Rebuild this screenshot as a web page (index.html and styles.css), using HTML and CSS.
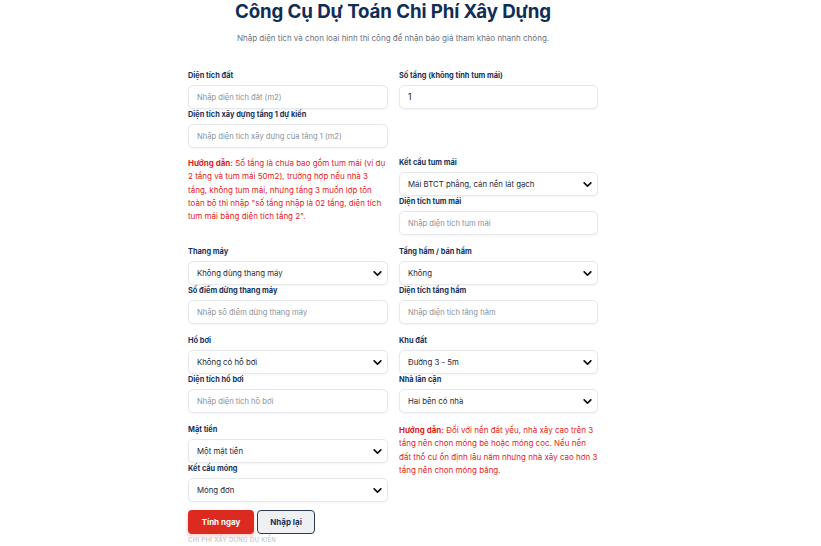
FILE: index.html
```html
<!DOCTYPE html>
<html lang="vi">
<head>
<meta charset="utf-8">
<title>Công Cụ Dự Toán Chi Phí Xây Dựng</title>
<link rel="stylesheet" href="styles.css">
</head>
<body>
<div class="page">
  <header class="head">
    <h1 class="title">Công Cụ Dự Toán Chi Phí Xây Dựng</h1>
    <p class="sub">Nhập diện tích và chọn loại hình thi công để nhận báo giá tham khảo nhanh chóng.</p>
  </header>

  <form class="form">
    <section class="sec sec-a">
      <div class="field"><label class="lbl">Diện tích đất</label><input class="ctl" type="text" placeholder="Nhập diện tích đất (m2)"></div>
      <div class="field"><label class="lbl">Số tầng (không tính tum mái)</label><input class="ctl val" type="text" value="1"></div>
      <div class="field"><label class="lbl">Diện tích xây dựng tầng 1 dự kiến</label><input class="ctl" type="text" placeholder="Nhập diện tích xây dựng của tầng 1 (m2)"></div>
      <div></div>
    </section>

    <section class="sec sec-b">
      <p class="guide"><b>Hướng dẫn:</b> Số tầng là chưa bao gồm tum mái (ví dụ 2 tầng và tum mái 50m2), trường hợp nếu nhà 3 tầng, không tum mái, nhưng tầng 3 muốn lợp tôn toàn bộ thì nhập "số tầng nhập là 02 tầng, diện tích tum mái bằng diện tích tầng 2".</p>
      <div class="stack">
        <div class="field"><label class="lbl">Kết cấu tum mái</label>
          <div class="sel"><select class="ctl"><option>Mái BTCT phẳng, cán nền lát gạch</option></select><svg class="chev" viewBox="0 0 10 6"><path d="M1 1l4 4 4-4"/></svg></div>
        </div>
        <div class="field"><label class="lbl">Diện tích tum mái</label><input class="ctl" type="text" placeholder="Nhập diện tích tum mái"></div>
      </div>
    </section>

    <section class="sec">
      <div class="field"><label class="lbl">Thang máy</label>
        <div class="sel"><select class="ctl"><option>Không dùng thang máy</option></select><svg class="chev" viewBox="0 0 10 6"><path d="M1 1l4 4 4-4"/></svg></div>
      </div>
      <div class="field"><label class="lbl">Tầng hầm / bán hầm</label>
        <div class="sel"><select class="ctl"><option>Không</option></select><svg class="chev" viewBox="0 0 10 6"><path d="M1 1l4 4 4-4"/></svg></div>
      </div>
      <div class="field"><label class="lbl">Số điểm dừng thang máy</label><input class="ctl" type="text" placeholder="Nhập số điểm dừng thang máy"></div>
      <div class="field"><label class="lbl">Diện tích tầng hầm</label><input class="ctl" type="text" placeholder="Nhập diện tích tầng hầm"></div>
    </section>

    <section class="sec">
      <div class="field"><label class="lbl">Hồ bơi</label>
        <div class="sel"><select class="ctl"><option>Không có hồ bơi</option></select><svg class="chev" viewBox="0 0 10 6"><path d="M1 1l4 4 4-4"/></svg></div>
      </div>
      <div class="field"><label class="lbl">Khu đất</label>
        <div class="sel"><select class="ctl"><option>Đường 3 - 5m</option></select><svg class="chev" viewBox="0 0 10 6"><path d="M1 1l4 4 4-4"/></svg></div>
      </div>
      <div class="field"><label class="lbl">Diện tích hồ bơi</label><input class="ctl" type="text" placeholder="Nhập diện tích hồ bơi"></div>
      <div class="field"><label class="lbl">Nhà lân cận</label>
        <div class="sel"><select class="ctl"><option>Hai bên có nhà</option></select><svg class="chev" viewBox="0 0 10 6"><path d="M1 1l4 4 4-4"/></svg></div>
      </div>
    </section>

    <section class="sec sec-e">
      <div class="stack">
        <div class="field"><label class="lbl">Mặt tiền</label>
          <div class="sel"><select class="ctl"><option>Một mặt tiền</option></select><svg class="chev" viewBox="0 0 10 6"><path d="M1 1l4 4 4-4"/></svg></div>
        </div>
        <div class="field"><label class="lbl">Kết cấu móng</label>
          <div class="sel"><select class="ctl"><option>Móng đơn</option></select><svg class="chev" viewBox="0 0 10 6"><path d="M1 1l4 4 4-4"/></svg></div>
        </div>
      </div>
      <p class="guide"><b>Hướng dẫn:</b> Đối với nền đất yếu, nhà xây cao trên 3 tầng nên chọn móng bè hoặc móng cọc. Nếu nền đất thổ cư ổn định lâu năm nhưng nhà xây cao hơn 3 tầng nên chọn móng băng.</p>
    </section>

    <div class="actions">
      <button type="button" class="btn btn-main">Tính ngay</button>
      <button type="reset" class="btn btn-alt">Nhập lại</button>
    </div>
    <p class="result-cap">CHI PHÍ XÂY DỰNG DỰ KIẾN</p>
  </form>
</div>
</body>
</html>
```

FILE: styles.css
```css
* { box-sizing: border-box; }
html, body { margin: 0; padding: 0; background: #fff; }
body { font-family: Inter, "Noto Sans", "Liberation Sans", sans-serif; color: #0f2a4d; }

.page { width: 786px; height: 546px; overflow: hidden; }

.head { text-align: center; }
.title { margin: 0; font-size: 18.7px; line-height: 24px; font-weight: 700; color: #102d56; letter-spacing: -0.1px; }
.sub { margin: 8px 0 0; font-size: 8px; line-height: 12px; color: #6b7280; }

.form { width: 410px; margin: 26px auto 0; }

.sec { display: grid; grid-template-columns: 200px 199px; column-gap: 11px; align-items: start; }
.sec + .sec { margin-top: 11px; }
.sec-b { margin-top: 9px !important; }
.sec-e { margin-top: 11px !important; }

.field { display: flex; flex-direction: column; }
.lbl { font-size: 7.4px; line-height: 11px; font-weight: 700; color: #17325a; margin-bottom: 4px; }

.ctl { display: block; width: 100%; height: 24px; border: 1px solid #e6e8ec; border-radius: 5px; background: #fff;
  box-shadow: 0 1px 2px rgba(16, 24, 40, 0.05); font-family: inherit; font-size: 7.6px; color: #1f2937; padding: 0 8px; outline: none; }
.ctl::placeholder { color: #8a9099; }
.val { font-size: 8.5px; color: #111827; }

.sel { position: relative; }
select.ctl { appearance: none; -webkit-appearance: none; font-size: 7.8px; padding-left: 8px; color: #1f2937; }
.chev { position: absolute; right: 6px; top: 10px; width: 9px; height: 5px; fill: none; stroke: #111; stroke-width: 2; stroke-linecap: round; stroke-linejoin: round; pointer-events: none; }

.stack { display: flex; flex-direction: column; }

.guide { margin: 0; font-size: 8px; line-height: 13.3px; color: #e42222; }
.guide b { font-weight: 700; color: #e01b1b; }

.actions { display: flex; gap: 3px; margin-top: 8px; }
.btn { height: 24px; border-radius: 4px; font-family: inherit; font-size: 8px; font-weight: 700; padding: 0; cursor: pointer; }
.btn-main { width: 66px; background: #dc2a20; color: #fff; border: none; box-shadow: 0 2px 4px rgba(220, 42, 32, 0.25); }
.btn-alt { width: 58px; background: #eef0f4; color: #17325a; border: 1px solid #2c3a4f; }

.result-cap { margin: 1px 0 0; font-size: 6px; line-height: 10px; color: #b9bdc4; letter-spacing: 0.3px; }
```
